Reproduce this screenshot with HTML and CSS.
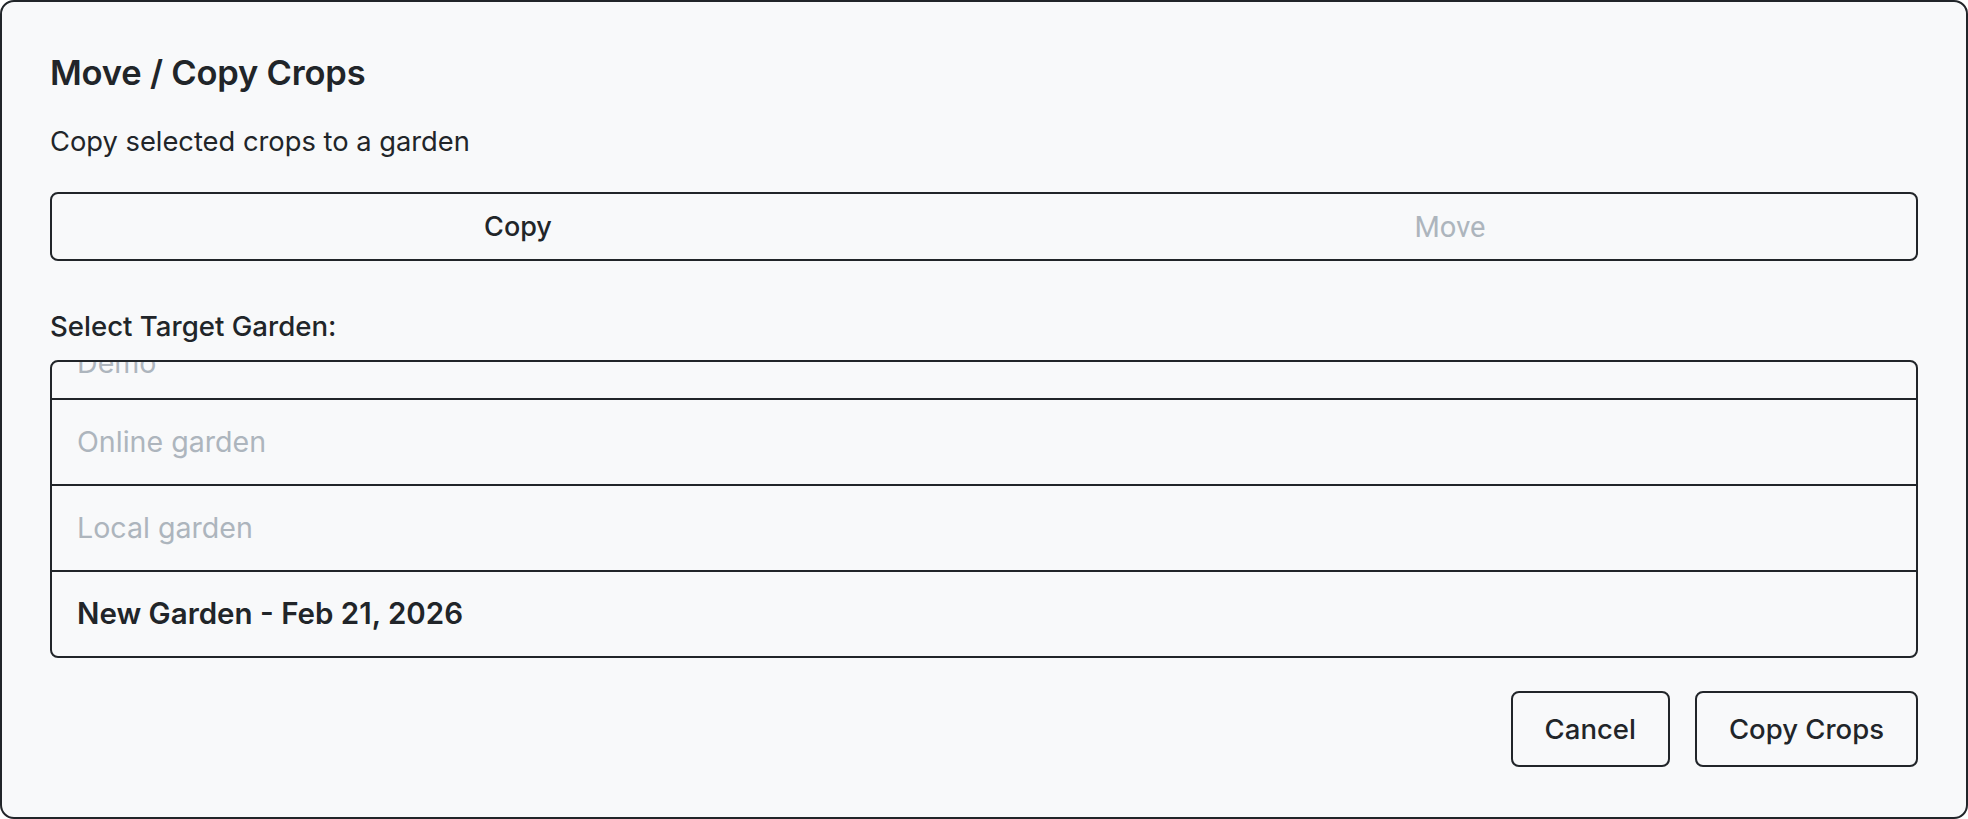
FILE: index.html
```html
<!DOCTYPE html>
<html lang="en">
<head>
<meta charset="utf-8">
<title>Move / Copy Crops</title>
<link rel="stylesheet" href="styles.css">
</head>
<body>
<div class="dialog">
  <h1 class="title">Move / Copy Crops</h1>
  <p class="subtitle">Copy selected crops to a garden</p>
  <div class="toggle">
    <div class="toggle-opt active">Copy</div>
    <div class="toggle-opt inactive">Move</div>
  </div>
  <div class="label">Select Target Garden:</div>
  <div class="list">
    <div class="list-inner">
      <div class="row muted first">Demo</div>
      <div class="row muted">Online garden</div>
      <div class="row muted">Local garden</div>
      <div class="row current">New Garden - Feb 21, 2026</div>
    </div>
  </div>
  <div class="actions">
    <button class="btn">Cancel</button>
    <button class="btn">Copy Crops</button>
  </div>
</div>
</body>
</html>
```
FILE: styles.css
```css
* { box-sizing: border-box; }
html, body { margin: 0; padding: 0; background: #ffffff; }
body { font-family: Inter, "Noto Sans", sans-serif; color: #212529; }

.dialog {
  width: 1968px;
  height: 819px;
  border: 2px solid #212529;
  border-radius: 14px;
  background: #f8f9fa;
  padding: 48px;
  display: flex;
  flex-direction: column;
}

.title {
  margin: 0;
  font-size: 34.5px;
  font-weight: 600;
  line-height: 46px;
  letter-spacing: -0.2px;
}

.subtitle {
  margin: 28px 0 0;
  font-size: 27.3px;
  line-height: 36px;
  font-weight: 400;
}

.toggle {
  margin-top: 32px;
  height: 69px;
  border: 2px solid #212529;
  border-radius: 8px;
  display: flex;
}
.toggle-opt {
  flex: 1;
  display: flex;
  align-items: center;
  justify-content: center;
  font-size: 27px;
}
.toggle-opt.active { font-weight: 500; color: #212529; }
.toggle-opt.inactive { font-family: Roboto, sans-serif; color: #adb5bd; font-size: 29px; }

.label {
  margin-top: 47px;
  font-size: 27.6px;
  font-weight: 500;
  line-height: 36px;
}

.list {
  margin-top: 16px;
  height: 298px;
  border: 2px solid #212529;
  border-radius: 8px;
  overflow: hidden;
}
.list-inner { margin-top: -48px; }
.row {
  height: 86px;
  border-bottom: 2px solid #212529;
  padding: 0 25px;
  display: flex;
  align-items: center;
  font-size: 28.6px;
  line-height: 1;
}
.row.first { padding-top: 14px; }
.row:last-child { border-bottom: none; height: 84px; }
.row.muted { color: #adb5bd; }
.row.current { color: #212529; font-weight: 600; font-size: 29.5px; }

.actions {
  margin-top: 33px;
  display: flex;
  justify-content: flex-end;
  gap: 25px;
}
.btn {
  height: 76px;
  padding: 0 32px;
  border: 2px solid #212529;
  border-radius: 8px;
  background: #f8f9fa;
  color: #212529;
  font-family: Inter, "Noto Sans", sans-serif;
  font-size: 27.5px;
  font-weight: 500;
}
```
